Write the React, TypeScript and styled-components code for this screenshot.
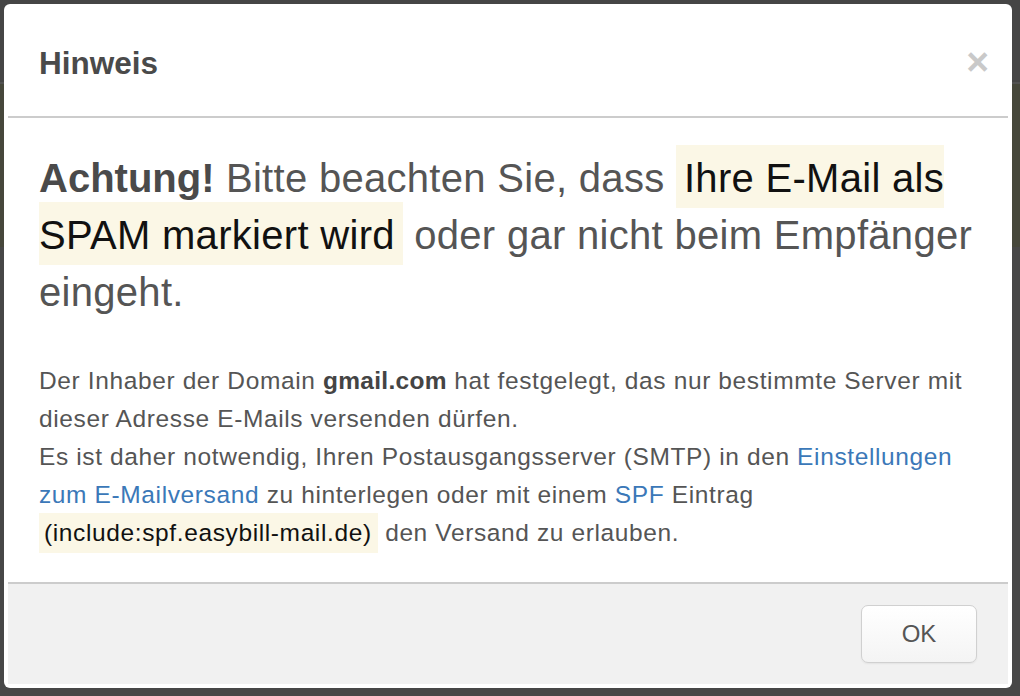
import React from "react";
import styled, { createGlobalStyle } from "styled-components";

const Global = createGlobalStyle`
  html, body {
    margin: 0;
    padding: 0;
    height: 100%;
    background: #474747;
    font-family: "Helvetica Neue", "Liberation Sans", Arial, sans-serif;
  }
  #root { height: 100%; }
`;

const Page = styled.div`
  height: 696px;
  display: flex;
  flex-direction: column;
  background: #474747;
`;

const PageBar = styled.div`
  height: 82px;
  border-bottom: 2px solid #525252;
  background: #454545;
`;

const PageBand = styled.div`
  height: 163px;
  background: #46473b;
`;

const Overlay = styled.div`
  position: fixed;
  inset: 0;
  padding: 4px 8px 8px 4px;
  display: flex;
`;

const Modal = styled.div`
  flex: 1;
  background: #fff;
  border-radius: 6px;
  padding: 4px;
  display: flex;
  flex-direction: column;
  box-sizing: border-box;
`;

const Header = styled.div`
  height: 110px;
  border-bottom: 2px solid #cccccc;
  display: flex;
  align-items: center;
  justify-content: space-between;
  padding: 0 19px 0 31px;
  box-sizing: border-box;
`;

const Title = styled.h3`
  margin: 0;
  font-family: "Helvetica Neue", "Liberation Sans", Arial, sans-serif;
  font-weight: 700;
  font-size: 31.5px;
  color: #4a4a4a;
  padding-top: 2px;
`;

const Close = styled.button`
  border: 0;
  background: transparent;
  padding: 0;
  font-family: "Liberation Sans", Arial, sans-serif;
  font-weight: 700;
  font-size: 39px;
  line-height: 1;
  color: #c9c9c9;
  cursor: pointer;
  margin-top: -2px;
`;

const Body = styled.div`
  flex: 1;
  padding: 32px 31px 0 31px;
  box-sizing: border-box;
`;

const Lead = styled.p`
  margin: 0 0 41px;
  font-size: 40px;
  line-height: 57px;
  font-weight: 400;
  color: #555555;
  letter-spacing: 0.3px;
`;

const Strong = styled.strong`
  font-weight: 700;
  color: #4a4a4a;
  letter-spacing: 0;
`;

const Mark = styled.span<{ $small?: boolean }>`
  background: #fbf7e6;
  color: #111;
  padding: ${(p) => (p.$small ? "6px 6px 7px 5px" : "11px 8px 8px 8px")};
`;

const Text = styled.p`
  margin: 0;
  font-size: 24.5px;
  line-height: 38px;
  letter-spacing: 0.62px;
  color: #555555;
`;

const Bold = styled.b`
  font-weight: 700;
  color: #444;
  letter-spacing: 0.3px;
`;

const Link = styled.a`
  color: #3b78b8;
  text-decoration: none;
`;

const Footer = styled.div`
  height: 102px;
  border-top: 2px solid #cccccc;
  background: #f1f1f1;
  display: flex;
  align-items: center;
  justify-content: flex-end;
  padding: 0 31px 1px 0;
  box-sizing: border-box;
`;

const Button = styled.button`
  width: 116px;
  height: 58px;
  border: 1px solid #d0d0d0;
  border-radius: 7px;
  background: linear-gradient(#ffffff, #f4f4f4);
  box-shadow: 0 1px 2px rgba(0, 0, 0, 0.06);
  font-family: "Helvetica Neue", "Liberation Sans", Arial, sans-serif;
  font-size: 24px;
  color: #555;
  cursor: pointer;
`;

export default function App() {
  return (
    <>
      <Global />
      <Page>
        <PageBar />
        <PageBand />
      </Page>
      <Overlay>
        <Modal>
          <Header>
            <Title>Hinweis</Title>
            <Close aria-label="Schließen">×</Close>
          </Header>
          <Body>
            <Lead>
              <Strong>Achtung!</Strong> Bitte beachten Sie, dass{" "}
              <Mark>Ihre E-Mail als SPAM markiert wird</Mark> oder gar nicht beim
              Empfänger eingeht.
            </Lead>
            <Text>
              Der Inhaber der Domain <Bold>gmail.com</Bold> hat festgelegt, das nur
              bestimmte Server mit dieser Adresse E-Mails versenden dürfen.
              <br />
              Es ist daher notwendig, Ihren Postausgangsserver (SMTP) in den{" "}
              <Link href="#">Einstellungen zum E-Mailversand</Link> zu hinterlegen
              oder mit einem <Link href="#">SPF</Link> Eintrag{" "}
              <Mark $small>(include:spf.easybill-mail.de)</Mark> den Versand zu
              erlauben.
            </Text>
          </Body>
          <Footer>
            <Button>OK</Button>
          </Footer>
        </Modal>
      </Overlay>
    </>
  );
}
